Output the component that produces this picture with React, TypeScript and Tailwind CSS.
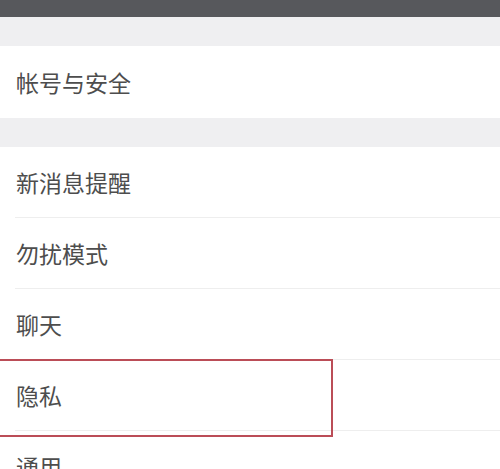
import React from 'react';

const font = { fontFamily: '"Noto Sans CJK SC", "Noto Sans", sans-serif' };

const items = ['新消息提醒', '勿扰模式', '聊天', '隐私', '通用'];

export default function App() {
  return (
    <div className="h-[469px] w-[500px] overflow-hidden bg-[#efeff1]" style={font}>
      <div className="h-[17px] bg-[#57585c]" />
      <div className="h-[29px]" />
      <div className="flex h-[72px] items-center bg-white pl-4">
        <span className="text-[23px] leading-none text-[#4d4d4d]">帐号与安全</span>
      </div>
      <div className="h-[29px]" />
      <div className="bg-white">
        {items.map((label) => (
          <div key={label} className="relative">
            <div className="relative flex h-[71px] items-center pl-4">
              <span className="text-[23px] leading-none text-[#4d4d4d]">{label}</span>
              <div className="absolute bottom-0 left-[15px] right-0 h-px bg-[#eeeeee]" />
            </div>
            {label === '隐私' && (
              <div className="pointer-events-none absolute -left-[3px] -top-[1px] h-[78px] w-[336px] border-2 border-[#bb4d57]" />
            )}
          </div>
        ))}
      </div>
    </div>
  );
}
